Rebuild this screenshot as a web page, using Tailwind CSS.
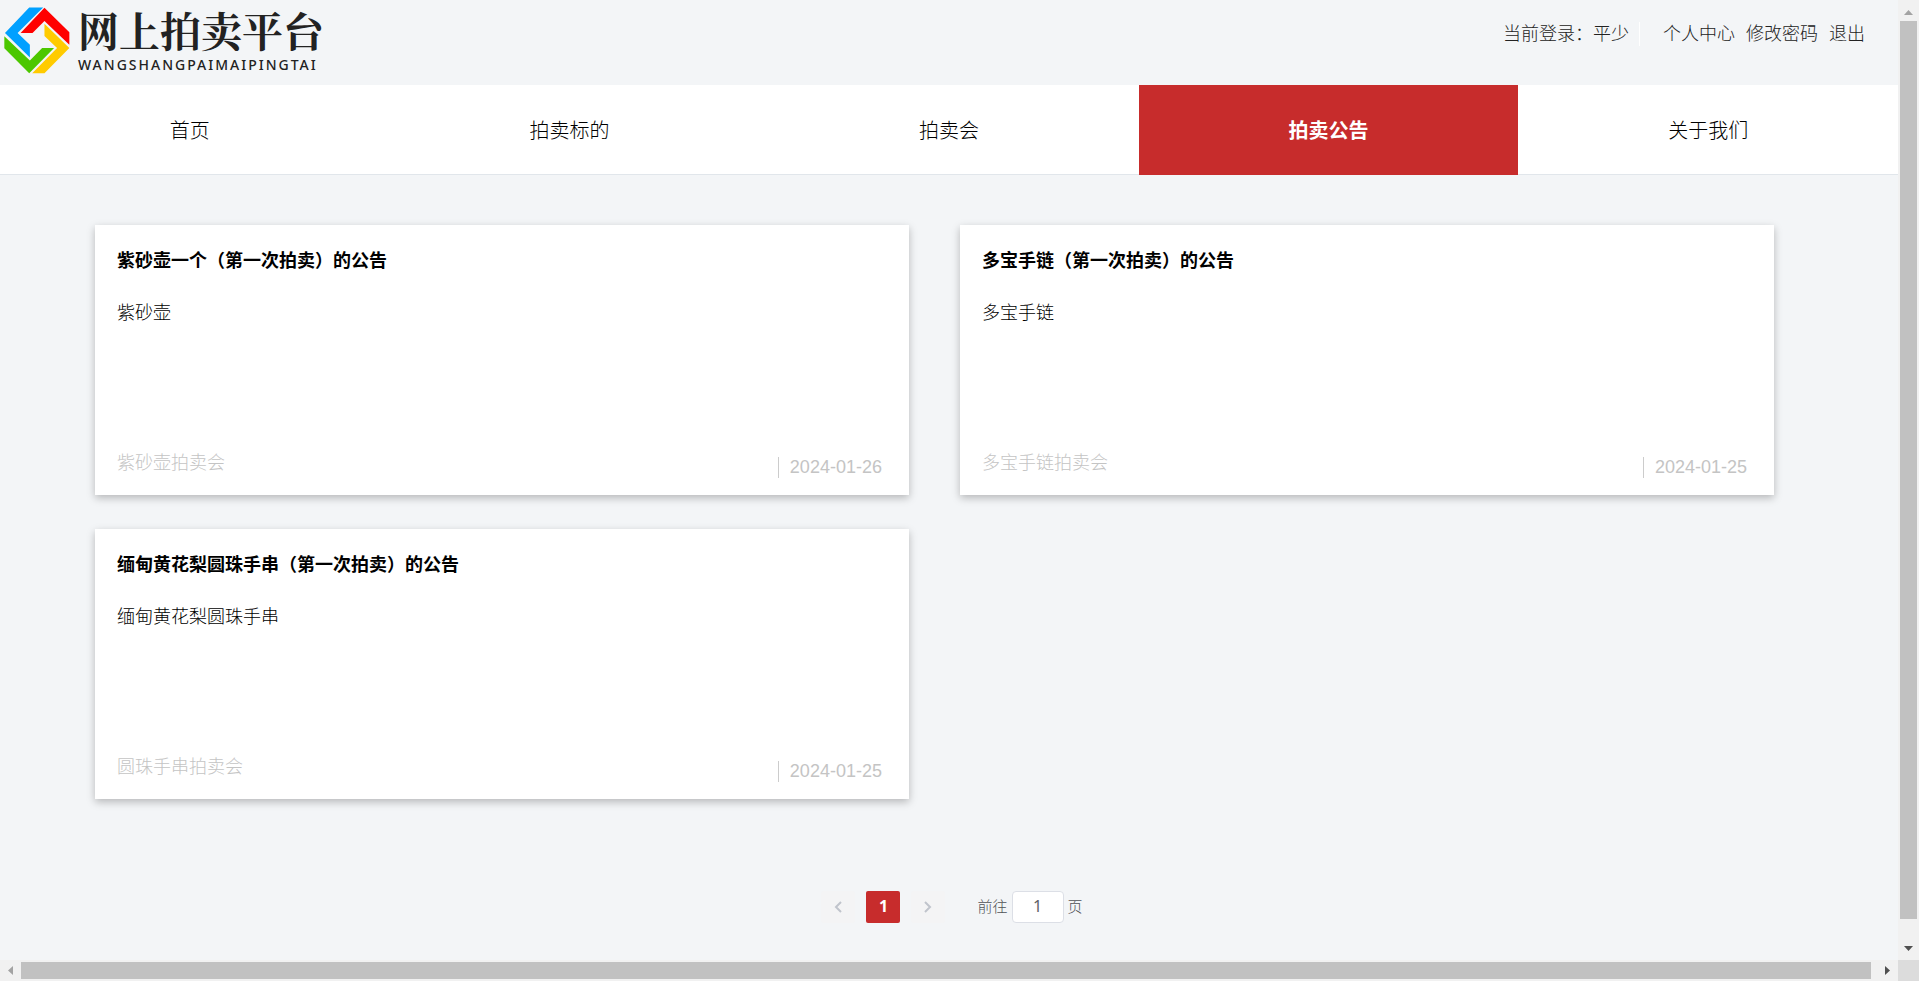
<!DOCTYPE html>
<html lang="zh-CN">
<head>
    <meta charset="UTF-8">
    <meta name="viewport" content="width=device-width, initial-scale=1.0">
    <title>网上拍卖平台</title>
    <script src="https://cdn.jsdelivr.net/npm/@tailwindcss/browser@4"></script>
</head>
<body class="h-screen overflow-hidden grid grid-cols-[1fr_21px] grid-rows-[1fr_21px] bg-[#f3f5f7] text-black font-light font-['Liberation_Sans','Noto_Sans_CJK_SC',sans-serif]">

    <div class="min-w-0 overflow-hidden">
        <!-- Header -->
        <header class="h-[85px] flex justify-between items-start">
            <a href="#" class="flex items-start gap-2 pl-1">
                <svg class="w-[66px] h-[67px] mt-[7px]" viewBox="12 20 199 201">
                    <path fill="#00a0ff" d="M88 21h42L53 98l37 35v39L15 98z"/>
                    <path fill="#ff0000" d="M134 22l75 74v37l-75-71-36 36H62z"/>
                    <path fill="#ffcb00" d="M134 70l75 73-75 76H97l75-76-38-36z"/>
                    <path fill="#4cc700" d="M13 108l77 73 37-38h36l-75 76-75-75z"/>
                </svg>
                <span class="flex flex-col text-[#222]">
                    <span class="text-[41px] leading-[59px] font-bold font-['Noto_Serif_CJK_SC','Noto_Sans_CJK_SC',serif]">网上拍卖平台</span>
                    <span class="text-sm leading-3 font-medium tracking-[2px] font-['Noto_Sans',sans-serif]">WANGSHANGPAIMAIPINGTAI</span>
                </span>
            </a>
            <div class="flex items-center pt-[22px] pr-[33px] text-lg leading-6 text-[#222]">
                <span class="pr-[10px] border-r border-white">当前登录：平少</span>
                <nav class="flex gap-[11px] pl-[23px]">
                    <a href="#">个人中心</a>
                    <a href="#">修改密码</a>
                    <a href="#">退出</a>
                </nav>
            </div>
        </header>

        <!-- Main menu -->
        <nav class="grid grid-cols-5 h-[90px] bg-white text-xl text-center">
            <a href="#" class="flex items-center justify-center pt-[2px] border-b border-[#e1e6eb]">首页</a>
            <a href="#" class="flex items-center justify-center pt-[2px] border-b border-[#e1e6eb]">拍卖标的</a>
            <a href="#" class="flex items-center justify-center pt-[2px] border-b border-[#e1e6eb]">拍卖会</a>
            <a href="#" class="flex items-center justify-center pt-[2px] bg-[#c72c2c] text-white font-bold">拍卖公告</a>
            <a href="#" class="flex items-center justify-center pt-[2px] border-b border-[#e1e6eb]">关于我们</a>
        </nav>

        <!-- Announcements -->
        <main class="pt-[50px]">
            <div class="grid grid-cols-2 gap-x-[51px] gap-y-[34px] pl-[5%] pr-[124px] text-lg">
                <article class="h-[270px] bg-white shadow-[0_3px_8px_rgba(0,0,0,0.25)] flex flex-col pl-[22px] pr-[27px] pt-[22px] pb-[17px]">
                    <h2 class="font-bold leading-7">紫砂壶一个（第一次拍卖）的公告</h2>
                    <p class="mt-6 leading-7">紫砂壶</p>
                    <div class="mt-auto flex justify-between items-start text-[#c4c4c4]">
                        <span class="leading-[26px]">紫砂壶拍卖会</span>
                        <time class="mt-[7px] pl-[11px] border-l border-[#ccc] leading-[21px]">2024-01-26</time>
                    </div>
                </article>
                <article class="h-[270px] bg-white shadow-[0_3px_8px_rgba(0,0,0,0.25)] flex flex-col pl-[22px] pr-[27px] pt-[22px] pb-[17px]">
                    <h2 class="font-bold leading-7">多宝手链（第一次拍卖）的公告</h2>
                    <p class="mt-6 leading-7">多宝手链</p>
                    <div class="mt-auto flex justify-between items-start text-[#c4c4c4]">
                        <span class="leading-[26px]">多宝手链拍卖会</span>
                        <time class="mt-[7px] pl-[11px] border-l border-[#ccc] leading-[21px]">2024-01-25</time>
                    </div>
                </article>
                <article class="h-[270px] bg-white shadow-[0_3px_8px_rgba(0,0,0,0.25)] flex flex-col pl-[22px] pr-[27px] pt-[22px] pb-[17px]">
                    <h2 class="font-bold leading-7">缅甸黄花梨圆珠手串（第一次拍卖）的公告</h2>
                    <p class="mt-6 leading-7">缅甸黄花梨圆珠手串</p>
                    <div class="mt-auto flex justify-between items-start text-[#c4c4c4]">
                        <span class="leading-[26px]">圆珠手串拍卖会</span>
                        <time class="mt-[7px] pl-[11px] border-l border-[#ccc] leading-[21px]">2024-01-25</time>
                    </div>
                </article>
            </div>

            <!-- Pagination -->
            <div class="flex justify-center items-center mt-[92px] pl-[6px] text-[15px] text-[#505256]">
                <button type="button" disabled aria-label="上一页" class="w-[34px] h-8 rounded-xs bg-[#f4f4f5] flex items-center justify-center">
                    <svg class="w-2 h-3" viewBox="0 0 8 12" fill="none" stroke="#c0c4cc" stroke-width="2"><path d="M7 1L2 6l5 5"/></svg>
                </button>
                <button type="button" class="w-[34px] h-8 ml-[11px] pb-[2px] rounded-xs bg-[#c72c2c] text-white text-base font-bold font-['Noto_Sans',sans-serif]">1</button>
                <button type="button" disabled aria-label="下一页" class="w-[34px] h-8 ml-[11px] rounded-xs bg-[#f4f4f5] flex items-center justify-center">
                    <svg class="w-2 h-3" viewBox="0 0 8 12" fill="none" stroke="#c0c4cc" stroke-width="2"><path d="M1 1l5 5-5 5"/></svg>
                </button>
                <label for="page" class="ml-8">前往</label>
                <input id="page" type="text" value="1" class="w-[52px] h-8 mx-1 pb-[2px] rounded border border-[#dcdfe6] bg-white text-center text-base text-[#606266] font-['Noto_Sans',sans-serif] font-normal">
                <span>页</span>
            </div>
        </main>
    </div>

    <!-- Scroll bars -->
    <div class="bg-[#f1f1f1] flex flex-col items-center" aria-hidden="true">
        <div class="h-[21px] flex items-center justify-center pt-[3px]">
            <svg class="w-[9px] h-[5px]" viewBox="0 0 9 5" fill="#a3a3a3"><path d="M0 5L4.500 0 9 5z"/></svg>
        </div>
        <div class="w-[17px] flex-1 mb-5 bg-[#c1c1c1]"></div>
        <div class="h-[21px] flex items-center justify-center pb-[2px]">
            <svg class="w-[9px] h-[5px]" viewBox="0 0 9 5" fill="#505050"><path d="M0 0h9L4.500 5z"/></svg>
        </div>
    </div>
    <div class="bg-[#f1f1f1] flex items-center" aria-hidden="true">
        <div class="w-[21px] flex items-center justify-center">
            <svg class="w-[5px] h-[9px]" viewBox="0 0 5 9" fill="#a3a3a3"><path d="M5 0v9L0 4.500z"/></svg>
        </div>
        <div class="h-[17px] flex-1 mr-[6px] bg-[#c1c1c1]"></div>
        <div class="w-[21px] flex items-center justify-center">
            <svg class="w-[5px] h-[9px]" viewBox="0 0 5 9" fill="#505050"><path d="M0 0v9l5-4.500z"/></svg>
        </div>
    </div>
    <div class="bg-[#dcdcdc]"></div>
</body>
</html>
